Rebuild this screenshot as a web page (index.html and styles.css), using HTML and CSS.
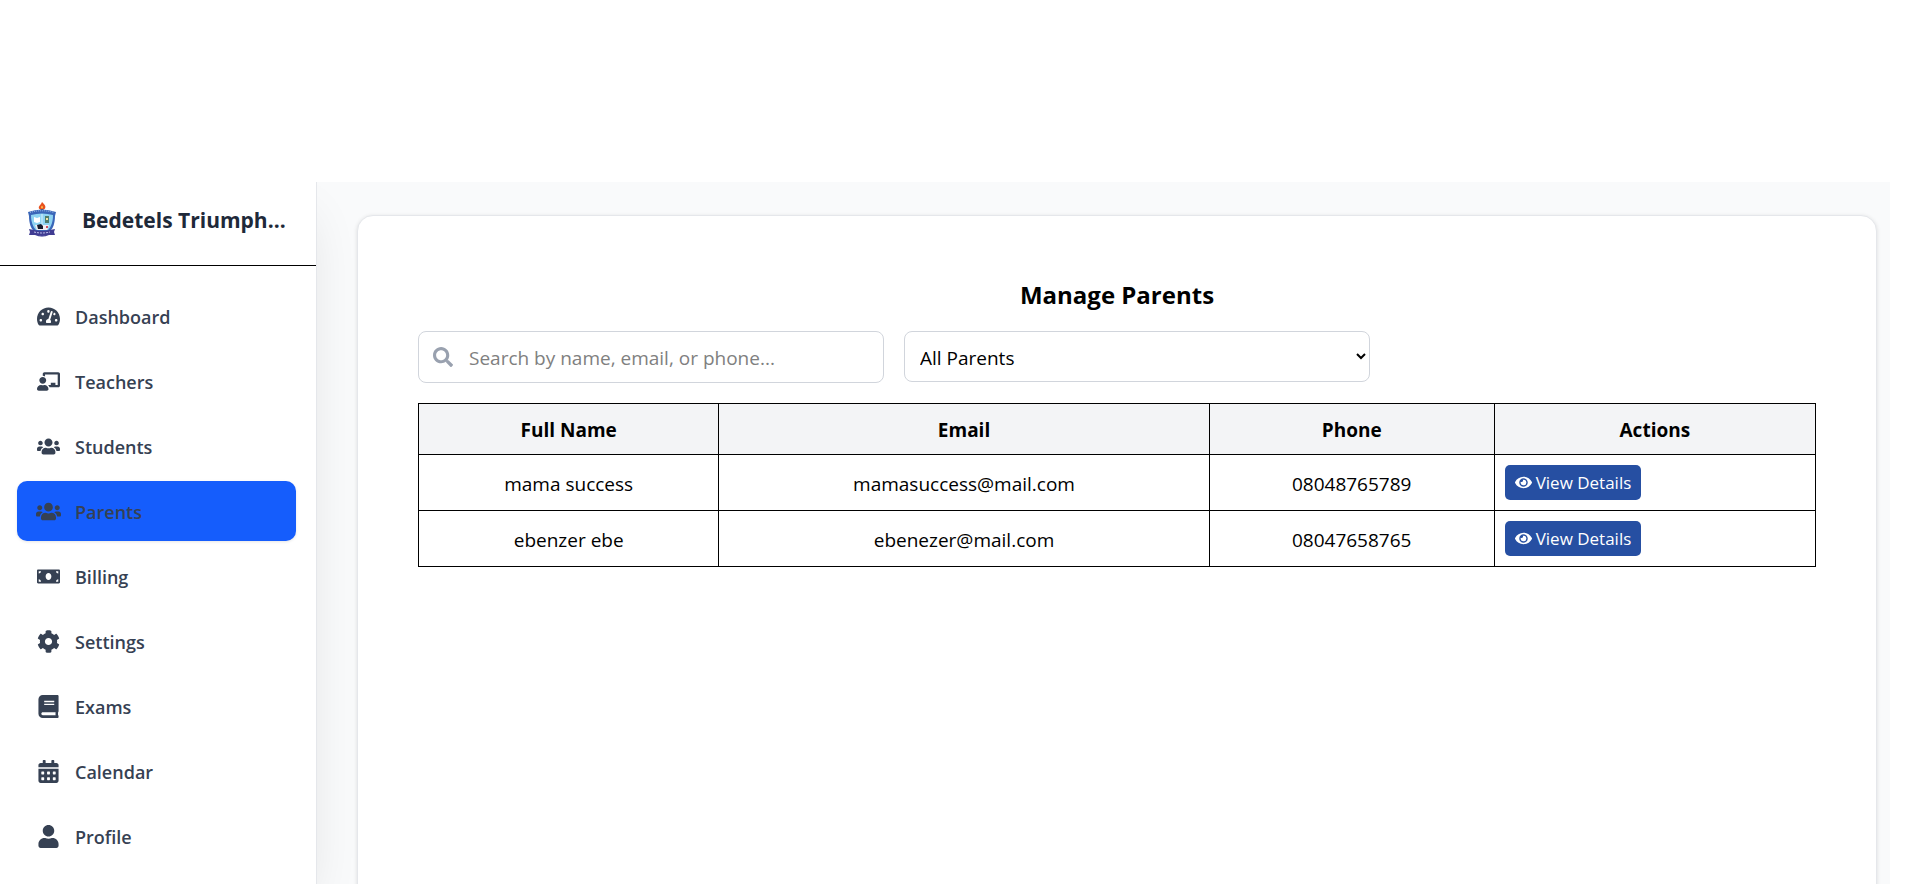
FILE: index.html
```html
<!DOCTYPE html>
<html lang="en">
<head>
<meta charset="utf-8">
<meta name="viewport" content="width=device-width, initial-scale=1">
<title>Manage Parents</title>
<link rel="stylesheet" href="styles.css">
</head>
<body>
<div class="app">
  <aside class="sidebar">
    <header class="brand">
      <svg class="brand-logo" viewBox="0 0 28 36" role="img" aria-label="School crest">
        <path d="M14 0C17 3 18 4 17 6.500C16 8 12 8 11 6.500C10 4 13 3 14 0Z" fill="#e8501c"/>
        <path d="M14 3.500C15.500 5 15 6.500 14 6.500S12.500 5 14 3.500Z" fill="#ffc04a"/>
        <path d="M12.500 7h3v3h-3Z" fill="#54506e"/>
        <path d="M0 10Q14 5 28 10L27 14C27 21 25 27 22 29H6C3 27 1 21 1 14Z" fill="#3a66b8"/>
        <path d="M3 13Q14 10 25 13C25 20 23 25 20 28H8C5 25 3 20 3 13Z" fill="#8fd4f2"/>
        <path d="M2 10.500Q14 7 26 10.500" fill="none" stroke="#a9c6ee" stroke-width="1" stroke-dasharray="1 1"/>
        <path d="M6 15l3 1 3-1v5l-3 1-3-1Z" fill="#fff"/>
        <path d="M17 14h4v7h-4Z" fill="#4f7d6c"/>
        <path d="M18 16h2v2h-2Z" fill="#f2e3a0"/>
        <path d="M14 12v11" stroke="#d8f0fa" stroke-width="1"/>
        <path d="M7 23h14l-2 5h-10Z" fill="#f3eef2"/>
        <path d="M9 23l4-1 2 2v3h-5Z" fill="#171b2b"/>
        <path d="M18 24h2v2h-2Z" fill="#cf5360"/>
        <path d="M1 27l5 1q8 2 16 0l5-1-1 3 1 3-6 0q-7 3-14 0l-6 0 1-3Z" fill="#403c92"/>
        <path d="M6 30q8 2 16 0" fill="none" stroke="#c0c2ec" stroke-width="1" stroke-dasharray="2 1"/>
        <path d="M10 33q4 2 8 0l-4 2Z" fill="#8f91c9"/>
      </svg>
      <h1 class="brand-name">Bedetels Triumph...</h1>
    </header>
    <nav class="nav" aria-label="Main">
      <a class="nav-item" href="#dashboard"><svg class="nav-icon" viewBox="0 0 576 512" aria-hidden="true"><path d="M288 32C128.940 32 0 160.940 0 320c0 52.800 14.250 102.260 39.060 144.800 5.610 9.620 16.300 15.200 27.440 15.200h443c11.140 0 21.830-5.580 27.440-15.200C561.750 422.260 576 372.800 576 320c0-159.060-128.940-288-288-288zm0 64c14.710 0 26.580 10.130 30.320 23.650-1.110 2.260-2.640 4.230-3.450 6.670l-9.220 27.670c-5.130 3.490-10.970 6.010-17.640 6.010-17.670 0-32-14.330-32-32S270.330 96 288 96zM96 384c-17.670 0-32-14.330-32-32s14.330-32 32-32 32 14.330 32 32-14.330 32-32 32zm48-160c-17.670 0-32-14.330-32-32s14.330-32 32-32 32 14.330 32 32-14.330 32-32 32zm246.770-72.410l-61.330 184C343.130 347.330 352 364.540 352 384c0 11.720-3.380 22.550-8.880 32H232.880c-5.500-9.450-8.880-20.280-8.880-32 0-33.940 26.500-61.430 59.900-63.590l61.340-184.010c4.170-12.560 17.730-19.450 30.360-15.170 12.570 4.190 19.350 17.790 15.170 30.360zm14.660 57.200l15.520-46.550c3.470-1.290 7.130-2.230 11.050-2.230 17.670 0 32 14.330 32 32s-14.330 32-32 32c-11.380-.010-20.890-6.280-26.570-15.220zM480 384c-17.670 0-32-14.330-32-32s14.330-32 32-32 32 14.330 32 32-14.330 32-32 32z"/></svg>Dashboard</a>
      <a class="nav-item" href="#teachers"><svg class="nav-icon" viewBox="0 0 640 512" aria-hidden="true"><path d="M208 352c-2.390 0-4.780.350-7.060 1.090C187.980 357.300 174.350 360 160 360c-14.370 0-27.980-2.700-40.950-6.910-2.280-.740-4.660-1.090-7.050-1.090C49.940 352-.330 402.480 0 464.620.140 490.880 21.730 512 48 512h224c26.270 0 47.860-21.120 48-47.380.330-62.140-49.940-112.620-112-112.620zm-48-32c53.020 0 96-42.980 96-96s-42.980-96-96-96-96 42.980-96 96 42.980 96 96 96zM592 0H208c-26.470 0-48 22.250-48 49.590V96c23.420 0 45.100 6.780 64 17.800V64h352v288h-64v-64H384v64h-76.240c19.100 16.690 33.120 38.730 39.690 64H592c26.470 0 48-22.250 48-49.590V49.590C640 22.250 618.470 0 592 0z"/></svg>Teachers</a>
      <a class="nav-item" href="#students"><svg class="nav-icon" viewBox="0 0 640 512" aria-hidden="true"><path id="users" d="M96 224c35.300 0 64-28.700 64-64s-28.700-64-64-64-64 28.700-64 64 28.700 64 64 64zm448 0c35.300 0 64-28.700 64-64s-28.700-64-64-64-64 28.700-64 64 28.700 64 64 64zm32 32h-64c-17.600 0-33.500 7.100-45.100 18.600 40.300 22.100 68.900 62 75.100 109.400h66c17.700 0 32-14.300 32-32v-32c0-35.300-28.700-64-64-64zm-256 0c61.900 0 112-50.100 112-112S381.900 32 320 32 208 82.100 208 144s50.100 112 112 112zm76.800 32h-8.300c-20.800 10-43.900 16-68.500 16s-47.600-6-68.500-16h-8.300C179.600 288 128 339.600 128 403.200V432c0 26.500 21.500 48 48 48h288c26.500 0 48-21.500 48-48v-28.800c0-63.600-51.600-115.200-115.200-115.200zm-223.700-13.400C161.500 263.100 145.600 256 128 256H64c-35.300 0-64 28.700-64 64v32c0 17.700 14.300 32 32 32h65.900c6.300-47.400 34.900-87.300 75.200-109.400z"/></svg>Students</a>
      <a class="nav-item active" href="#parents" aria-current="page"><svg class="nav-icon" viewBox="0 0 640 512" aria-hidden="true"><use href="#users"/></svg>Parents</a>
      <a class="nav-item" href="#billing"><svg class="nav-icon" viewBox="0 0 640 512" aria-hidden="true"><path d="M608 64H32C14.330 64 0 78.330 0 96v320c0 17.670 14.330 32 32 32h576c17.670 0 32-14.330 32-32V96c0-17.670-14.330-32-32-32zM48 400v-64c35.350 0 64 28.650 64 64H48zm0-224v-64h64c0 35.350-28.650 64-64 64zm272 176c-44.190 0-80-42.990-80-96 0-53.020 35.820-96 80-96s80 42.980 80 96c0 53.030-35.830 96-80 96zm272 48h-64c0-35.350 28.650-64 64-64v64zm0-224c-35.350 0-64-28.650-64-64h64v64z"/></svg>Billing</a>
      <a class="nav-item" href="#settings"><svg class="nav-icon" viewBox="0 0 512 512" aria-hidden="true"><path d="M487.400 315.700l-42.600-24.600c4.300-23.200 4.300-47 0-70.200l42.600-24.600c4.900-2.800 7.100-8.600 5.500-14-11.100-35.600-30-67.800-54.700-94.600-3.800-4.100-10-5.100-14.800-2.300L380.800 110c-17.900-15.400-38.500-27.300-60.800-35.100V25.800c0-5.600-3.900-10.500-9.400-11.700-36.700-8.200-74.300-7.800-109.200 0-5.500 1.200-9.400 6.100-9.400 11.700V75c-22.200 7.900-42.800 19.800-60.800 35.100L88.700 85.500c-4.900-2.800-11-1.900-14.800 2.300-24.700 26.700-43.600 58.900-54.700 94.600-1.700 5.400.6 11.200 5.500 14L67.300 221c-4.300 23.200-4.300 47 0 70.200l-42.600 24.600c-4.900 2.800-7.100 8.600-5.500 14 11.100 35.600 30 67.800 54.700 94.600 3.800 4.100 10 5.100 14.800 2.300l42.600-24.600c17.900 15.400 38.500 27.300 60.800 35.100v49.200c0 5.600 3.900 10.500 9.400 11.700 36.700 8.200 74.300 7.800 109.200 0 5.500-1.200 9.400-6.100 9.400-11.700v-49.200c22.200-7.900 42.800-19.800 60.800-35.100l42.600 24.600c4.900 2.800 11 1.900 14.800-2.300 24.700-26.700 43.600-58.900 54.700-94.600 1.500-5.500-.7-11.300-5.600-14.100zM256 336c-44.100 0-80-35.900-80-80s35.900-80 80-80 80 35.900 80 80-35.900 80-80 80z"/></svg>Settings</a>
      <a class="nav-item" href="#exams"><svg class="nav-icon" viewBox="0 0 448 512" aria-hidden="true"><path d="M448 360V24c0-13.300-10.700-24-24-24H96C43 0 0 43 0 96v320c0 53 43 96 96 96h328c13.300 0 24-10.700 24-24v-16c0-7.500-3.500-14.300-8.900-18.700-4.200-15.400-4.200-59.300 0-74.700 5.400-4.300 8.900-11.100 8.900-18.600zM128 134c0-3.300 2.700-6 6-6h212c3.300 0 6 2.700 6 6v20c0 3.300-2.700 6-6 6H134c-3.300 0-6-2.700-6-6v-20zm0 64c0-3.300 2.700-6 6-6h212c3.300 0 6 2.700 6 6v20c0 3.300-2.700 6-6 6H134c-3.300 0-6-2.700-6-6v-20zm253.400 250H96c-17.700 0-32-14.300-32-32 0-17.600 14.400-32 32-32h285.400c-1.900 17.100-1.900 46.900 0 64z"/></svg>Exams</a>
      <a class="nav-item" href="#calendar"><svg class="nav-icon" viewBox="0 0 448 512" aria-hidden="true"><path d="M0 464c0 26.500 21.500 48 48 48h352c26.500 0 48-21.500 48-48V192H0v272zm320-196c0-6.600 5.400-12 12-12h40c6.600 0 12 5.400 12 12v40c0 6.600-5.400 12-12 12h-40c-6.600 0-12-5.400-12-12v-40zm0 128c0-6.600 5.400-12 12-12h40c6.600 0 12 5.400 12 12v40c0 6.600-5.400 12-12 12h-40c-6.600 0-12-5.400-12-12v-40zM192 268c0-6.600 5.400-12 12-12h40c6.600 0 12 5.400 12 12v40c0 6.600-5.400 12-12 12h-40c-6.600 0-12-5.400-12-12v-40zm0 128c0-6.600 5.400-12 12-12h40c6.600 0 12 5.400 12 12v40c0 6.600-5.400 12-12 12h-40c-6.600 0-12-5.400-12-12v-40zM64 268c0-6.600 5.400-12 12-12h40c6.600 0 12 5.400 12 12v40c0 6.600-5.400 12-12 12H76c-6.600 0-12-5.400-12-12v-40zm0 128c0-6.600 5.400-12 12-12h40c6.600 0 12 5.400 12 12v40c0 6.600-5.400 12-12 12H76c-6.600 0-12-5.400-12-12v-40zM400 64h-48V16c0-8.800-7.200-16-16-16h-32c-8.800 0-16 7.200-16 16v48H160V16c0-8.800-7.200-16-16-16h-32c-8.800 0-16 7.200-16 16v48H48C21.500 64 0 85.500 0 112v48h448v-48c0-26.500-21.500-48-48-48z"/></svg>Calendar</a>
      <a class="nav-item" href="#profile"><svg class="nav-icon" viewBox="0 0 448 512" aria-hidden="true"><path d="M224 256c70.700 0 128-57.300 128-128S294.700 0 224 0 96 57.300 96 128s57.300 128 128 128zm89.600 32h-16.700c-22.200 10.200-46.900 16-72.900 16s-50.600-5.800-72.900-16h-16.700C60.200 288 0 348.200 0 422.400V464c0 26.500 21.500 48 48 48h352c26.500 0 48-21.500 48-48v-41.600c0-74.200-60.200-134.400-134.400-134.400z"/></svg>Profile</a>
    </nav>
  </aside>
  <main class="main">
    <section class="card">
      <h2 class="card-title">Manage Parents</h2>
      <div class="filters">
        <div class="search">
          <svg class="search-icon" viewBox="0 0 512 512" aria-hidden="true"><path d="M505 442.700L405.300 343c-4.500-4.500-10.600-7-17-7H372c27.600-35.300 44-79.700 44-128C416 93.100 322.900 0 208 0S0 93.100 0 208s93.100 208 208 208c48.300 0 92.700-16.400 128-44v16.300c0 6.400 2.500 12.500 7 17l99.700 99.700c9.400 9.400 24.600 9.400 33.900 0l28.300-28.300c9.400-9.400 9.400-24.600.1-34zM208 336c-70.700 0-128-57.200-128-128 0-70.700 57.200-128 128-128 70.700 0 128 57.200 128 128 0 70.700-57.200 128-128 128z"/></svg>
          <input class="search-input" type="text" placeholder="Search by name, email, or phone..." aria-label="Search parents">
        </div>
        <select class="filter-select" aria-label="Filter parents">
          <option>All Parents</option>
        </select>
      </div>
      <table class="parents">
        <colgroup><col class="col-name"><col class="col-email"><col class="col-phone"><col class="col-actions"></colgroup>
        <thead>
          <tr><th scope="col">Full Name</th><th scope="col">Email</th><th scope="col">Phone</th><th scope="col">Actions</th></tr>
        </thead>
        <tbody>
          <tr>
            <td>mama success</td><td>mamasuccess@mail.com</td><td>08048765789</td>
            <td class="actions"><button class="view-btn" type="button"><svg class="eye" viewBox="0 0 576 512" aria-hidden="true"><path id="eye" d="M572.520 241.400C518.290 135.590 410.930 64 288 64S57.680 135.640 3.480 241.410a32.350 32.350 0 0 0 0 29.190C57.710 376.410 165.070 448 288 448s230.320-71.640 284.520-177.410a32.350 32.350 0 0 0 0-29.190zM288 400a144 144 0 1 1 144-144 143.930 143.930 0 0 1-144 144zm0-240a95.310 95.310 0 0 0-25.310 3.790 47.850 47.850 0 0 1-66.900 66.900A95.780 95.780 0 1 0 288 160z"/></svg>View Details</button></td>
          </tr>
          <tr>
            <td>ebenzer ebe</td><td>ebenezer@mail.com</td><td>08047658765</td>
            <td class="actions"><button class="view-btn" type="button"><svg class="eye" viewBox="0 0 576 512" aria-hidden="true"><use href="#eye"/></svg>View Details</button></td>
          </tr>
        </tbody>
      </table>
    </section>
  </main>
</div>
</body>
</html>
```
FILE: styles.css
```css
* {
  box-sizing: border-box;
}

body {
  margin: 0;
  padding: 182px 29px 0 0;
  height: 100vh;
  overflow: hidden;
  background: #fff;
  color: #000;
  font-family: "Segoe UI", "Open Sans", "Noto Sans", sans-serif;
  font-size: 19px;
  line-height: 30px;
}

.app {
  display: flex;
  height: 100%;
  overflow: hidden;
  background: #f9fafb;
}

/* Sidebar */
.sidebar {
  flex: 0 0 317px;
  min-width: 0;
  background: #fff;
  border-right: 1px solid #e5e7eb;
  box-shadow: 0 25px 50px -12px rgba(0, 0, 0, 0.12);
}

.brand {
  display: flex;
  align-items: center;
  gap: 26px;
  height: 84px;
  padding: 0 20px 8px 28px;
  border-bottom: 1px solid #000;
}

.brand-logo {
  flex: none;
  width: 28px;
  height: 36px;
}

.brand-name {
  margin: 0;
  color: #1e2939;
  font-size: 21px;
  font-weight: 700;
  white-space: nowrap;
}

.nav {
  display: flex;
  flex-direction: column;
  gap: 5px;
  padding: 20px 20px 20px 17px;
}

.nav-item {
  display: flex;
  align-items: center;
  gap: 15px;
  height: 60px;
  padding: 1px 20px 0;
  border-radius: 10px;
  color: #364153;
  font-size: 18px;
  font-weight: 600;
  text-decoration: none;
}

.nav-icon {
  flex: none;
  width: 23px;
  height: 23px;
  overflow: visible;
  fill: currentColor;
}

.nav-item.active {
  background: #155dfc;
  box-shadow: 0 1px 3px rgba(0, 0, 0, 0.1);
}

.nav-item.active .nav-icon {
  width: 25px;
  margin: 0 -1px;
}

/* Content */
.main {
  flex: 1;
  min-width: 0;
  padding: 33px 13px 40px 40px;
}

.card {
  position: relative;
  min-height: 100vh;
  padding: 63px 60px;
  background: #fff;
  border: 1px solid #e5e7eb;
  border-radius: 16px;
  box-shadow: 0 1px 4px rgba(0, 0, 0, 0.12);
}

.card-title {
  margin: 0 0 20px;
  font-size: 24px;
  font-weight: 700;
  line-height: 32px;
  text-align: center;
}

.filters {
  display: grid;
  grid-template-columns: repeat(2, calc(100% / 3));
  gap: 20px;
  align-items: start;
  margin-bottom: 20px;
}

.search {
  display: flex;
  align-items: center;
  gap: 16px;
  height: 52px;
  padding: 0 14px;
  border: 1px solid #d1d5dc;
  border-radius: 8px;
}

.search-icon {
  flex: none;
  width: 20px;
  height: 20px;
  fill: #99a1af;
}

.search-input {
  flex: 1;
  min-width: 0;
  padding: 2px 0 0;
  border: 0;
  outline: 0;
  background: transparent;
  color: inherit;
  font: inherit;
}

.search-input::placeholder {
  color: #808080;
}

.filter-select {
  width: 100%;
  height: 51px;
  padding: 2px 0 0 11px;
  border: 1px solid #d1d5dc;
  border-radius: 8px;
  background: #fff;
  color: #000;
  font: inherit;
}

.parents {
  width: 100%;
  border-collapse: collapse;
  table-layout: fixed;
}

.col-name {
  width: 21.5%;
}

.col-email {
  width: 35.1%;
}

.col-phone {
  width: 20.4%;
}

.col-actions {
  width: 23%;
}

.parents th,
.parents td {
  padding: 11px 10px 9px;
  border: 1px solid #000;
  text-align: center;
}

.parents th {
  background: #f3f4f6;
  font-weight: 700;
}

.parents td.actions {
  padding: 10px;
  text-align: left;
}

.view-btn {
  display: flex;
  align-items: center;
  gap: 4px;
  height: 35px;
  padding: 0 10px;
  border: 0;
  border-radius: 5px;
  background: #264fa2;
  color: #fff;
  font: inherit;
  font-size: 17px;
}

.eye {
  width: 17px;
  height: 17px;
  fill: currentColor;
}
```
